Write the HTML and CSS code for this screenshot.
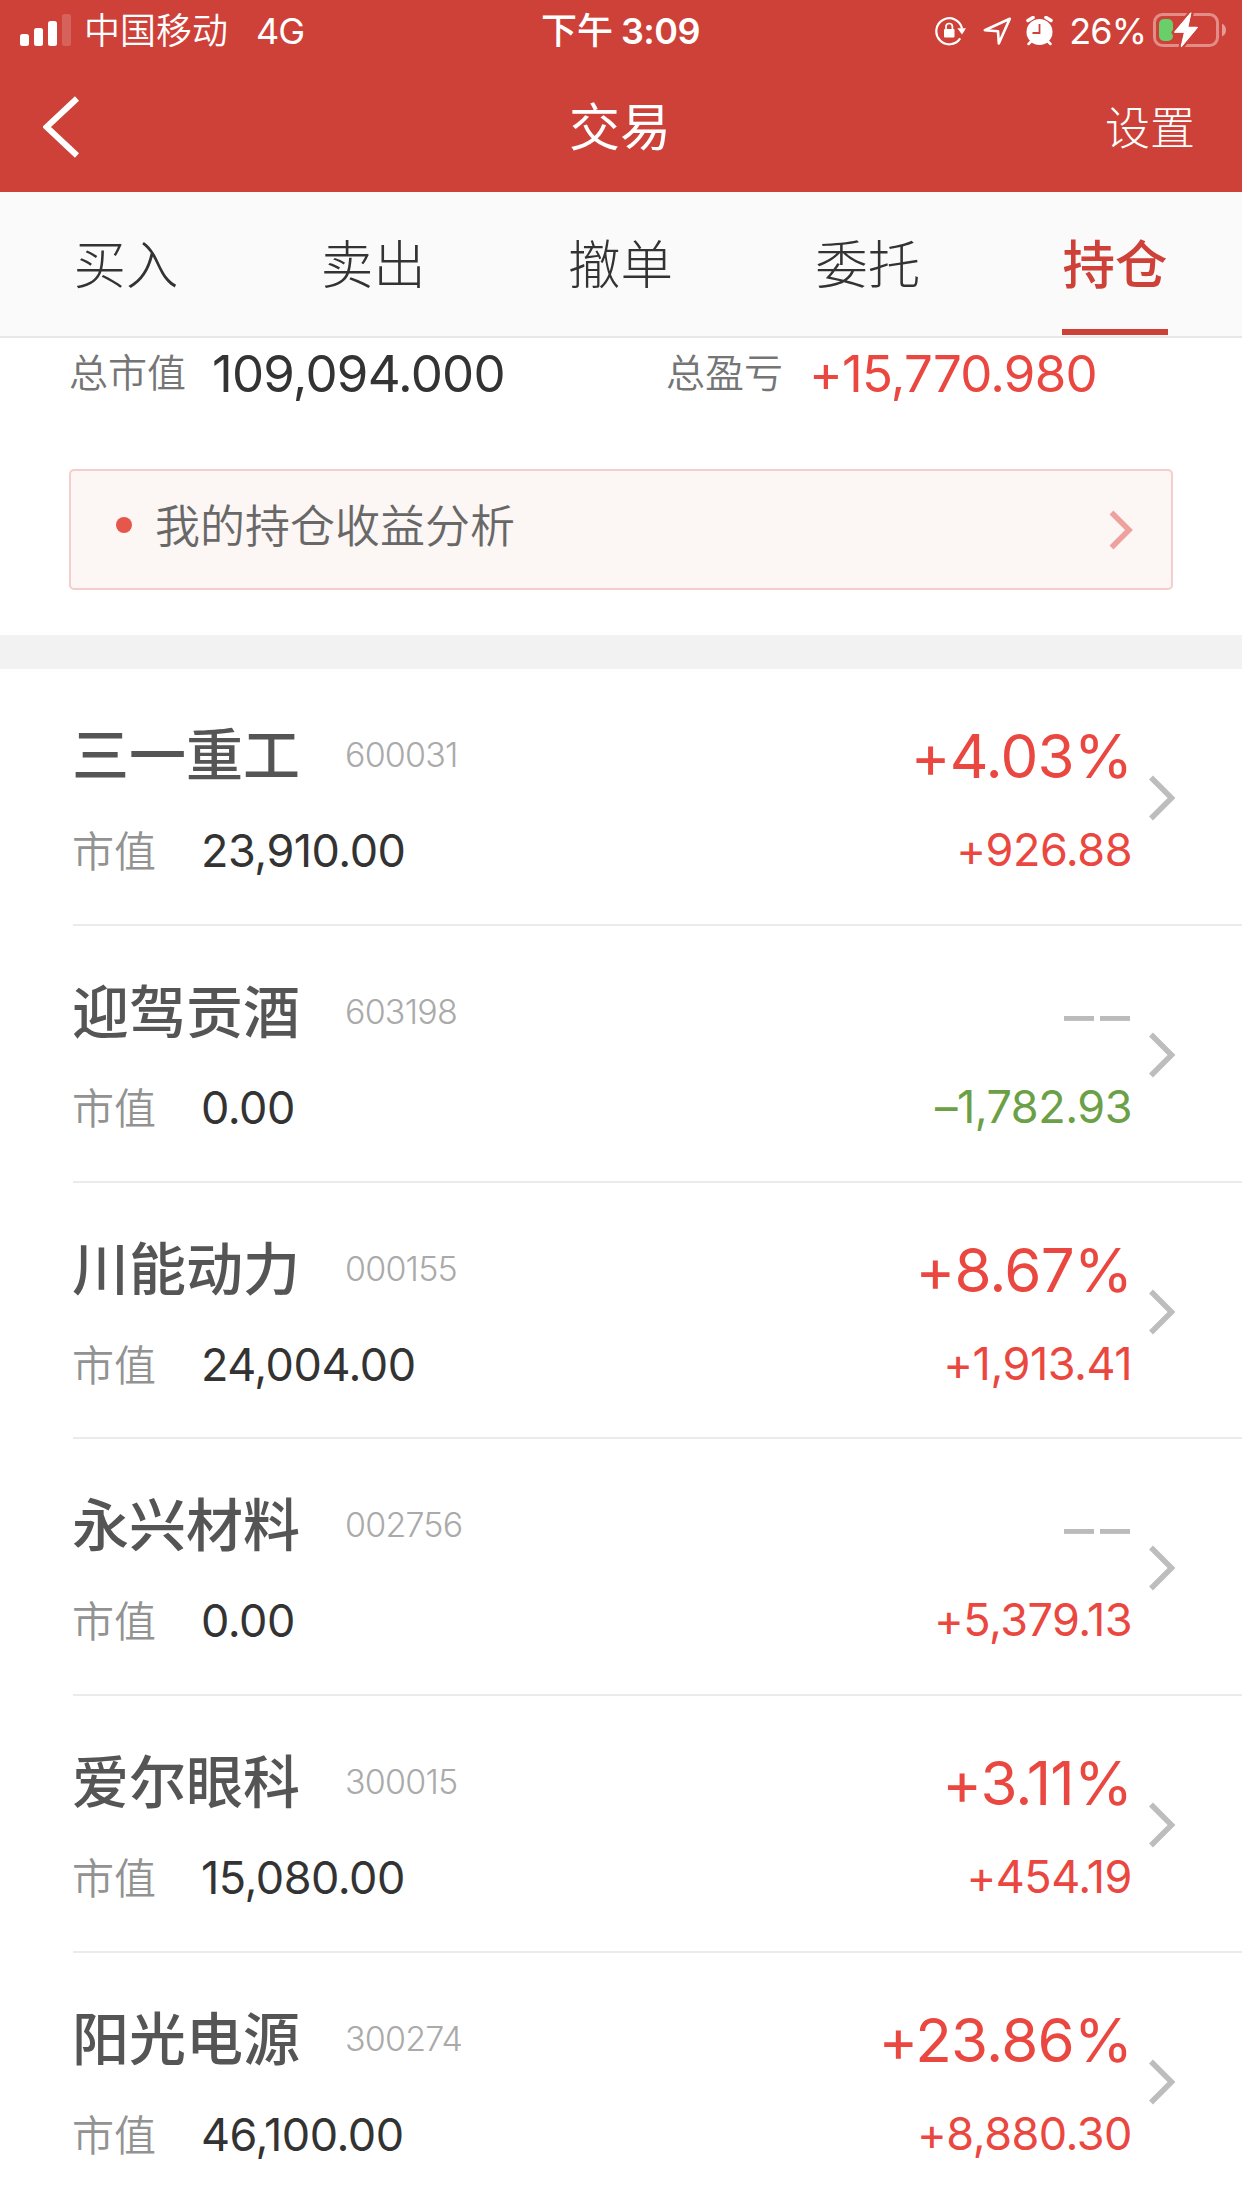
FILE: index.html
```html
<!DOCTYPE html>
<html lang="zh-CN">
<head>
<meta charset="utf-8">
<title>交易</title>
<link rel="stylesheet" href="styles.css">
</head>
<body>
<header class="header">
  <div class="status">
    <div class="status-left">
      <svg class="signal" width="51" height="32" viewBox="0 0 51 32" fill="#fff"><rect y="20" width="9" height="12" rx="2.5"/><rect x="14" y="14" width="9" height="18" rx="2.5"/><rect x="28" y="7" width="9" height="25" rx="2.5"/><rect x="42" width="9" height="32" rx="2.5" opacity=".18"/></svg>
      <span class="carrier">中国移动</span><span class="network">4G</span>
    </div>
    <div class="status-time"><span class="ampm">下午</span><span class="clock">3:09</span></div>
    <div class="status-right">
      <svg class="lock" width="32" height="30" viewBox="0 0 32 30" fill="none"><path d="M25.2 22.4A13 13 0 1 1 27 12.4" stroke="#fff" stroke-width="2.2"/><path d="M22.4 12.2H31L27 18.5Z" fill="#fff"/><rect x="9" y="13" width="10.500" height="8.500" rx="1" fill="#fff"/><path d="M11 14v-3.300a3.200 3.200 0 0 1 6.400 0V14" stroke="#fff" stroke-width="1.700"/></svg>
      <svg class="arrow" width="29" height="29" viewBox="0 0 29 29" fill="none"><path d="M1.800 13.200 26.800 1.800 15.800 26.500 15 14.200Z" stroke="#fff" stroke-width="2.600" stroke-linejoin="round"/></svg>
      <svg class="alarm" width="28" height="30" viewBox="0 0 28 30"><circle cx="13.500" cy="16" r="13" fill="#fff"/><path d="M2 4.500 7 1.500M25 4.500 20 1.500" stroke="#fff" stroke-width="3.500" stroke-linecap="round"/><path d="M5.500 25 2.500 28M21.500 25 24.500 28" stroke="#fff" stroke-width="2.500" stroke-linecap="round"/><path d="M6.500 17H13.500V8" stroke="#ce4138" stroke-width="1.800" fill="none"/></svg>
      <span class="percent">26%</span>
      <svg class="battery" width="74" height="36" viewBox="0 0 74 36"><rect x="1.500" y="2.500" width="63" height="31" rx="8" fill="none" stroke="#e38d88" stroke-width="3"/><path d="M69 11.500q4 2 4 6.500t-4 6.500Z" fill="#e49a95"/><rect x="6" y="7" width="14" height="22" rx="5" fill="#68cf6a"/><path d="M38.500 0 21 20.500H31L28 35.500 45 15H35Z" fill="#fff" stroke="#ce4138" stroke-width="5" paint-order="stroke" stroke-linejoin="round"/><path d="M37.500 1.500 22 20H32L28.500 34 44 15.500H34.500Z" fill="#fff" stroke="#fff" stroke-width="1.500" stroke-linejoin="round"/></svg>
    </div>
  </div>
  <div class="nav">
    <svg class="back" width="38" height="62" viewBox="0 0 38 62" fill="none"><path d="M34 2.500 3.500 31 34 59.500" stroke="#fff" stroke-width="6"/></svg>
    <h1 class="title">交易</h1>
    <span class="settings">设置</span>
  </div>
</header>
<nav class="tabs">
  <span class="tab">买入</span><span class="tab">卖出</span><span class="tab">撤单</span><span class="tab">委托</span><span class="tab tab-active">持仓</span>
</nav>
<section class="summary">
  <div class="totals">
    <div class="total"><span class="total-label">总市值</span><span class="total-value">109,094.000</span></div>
    <div class="total"><span class="total-label">总盈亏</span><span class="total-value up">+15,770.980</span></div>
  </div>
  <div class="analysis">
    <i class="dot"></i><span class="analysis-text">我的持仓收益分析</span>
    <svg width="24" height="40" viewBox="0 0 24 40" fill="none"><path d="M2.500 2.500 20 20 2.500 37.500" stroke="#eea29e" stroke-width="5.500"/></svg>
  </div>
</section>
<main class="list">
  <article class="row">
    <div class="stock"><div class="head"><h2 class="name">三一重工</h2><span class="code">600031</span></div><div class="market"><span class="label">市值</span><span class="value">23,910.00</span></div></div>
    <div class="result"><span class="rate up">+4.03%</span><span class="profit up">+926.88</span></div>
    <svg class="chevron" width="27" height="46" viewBox="0 0 27 46" fill="none"><path d="M2 2.500 22.500 23 2 43.500" stroke="#bdbdbd" stroke-width="5.500"/></svg>
  </article>
  <article class="row">
    <div class="stock"><div class="head"><h2 class="name">迎驾贡酒</h2><span class="code">603198</span></div><div class="market"><span class="label">市值</span><span class="value">0.00</span></div></div>
    <div class="result"><span class="rate none">––</span><span class="profit down">–1,782.93</span></div>
    <svg class="chevron" width="27" height="46" viewBox="0 0 27 46" fill="none"><path d="M2 2.500 22.500 23 2 43.500" stroke="#bdbdbd" stroke-width="5.500"/></svg>
  </article>
  <article class="row">
    <div class="stock"><div class="head"><h2 class="name">川能动力</h2><span class="code">000155</span></div><div class="market"><span class="label">市值</span><span class="value">24,004.00</span></div></div>
    <div class="result"><span class="rate up">+8.67%</span><span class="profit up">+1,913.41</span></div>
    <svg class="chevron" width="27" height="46" viewBox="0 0 27 46" fill="none"><path d="M2 2.500 22.500 23 2 43.500" stroke="#bdbdbd" stroke-width="5.500"/></svg>
  </article>
  <article class="row">
    <div class="stock"><div class="head"><h2 class="name">永兴材料</h2><span class="code">002756</span></div><div class="market"><span class="label">市值</span><span class="value">0.00</span></div></div>
    <div class="result"><span class="rate none">––</span><span class="profit up">+5,379.13</span></div>
    <svg class="chevron" width="27" height="46" viewBox="0 0 27 46" fill="none"><path d="M2 2.500 22.500 23 2 43.500" stroke="#bdbdbd" stroke-width="5.500"/></svg>
  </article>
  <article class="row">
    <div class="stock"><div class="head"><h2 class="name">爱尔眼科</h2><span class="code">300015</span></div><div class="market"><span class="label">市值</span><span class="value">15,080.00</span></div></div>
    <div class="result"><span class="rate up">+3.11%</span><span class="profit up">+454.19</span></div>
    <svg class="chevron" width="27" height="46" viewBox="0 0 27 46" fill="none"><path d="M2 2.500 22.500 23 2 43.500" stroke="#bdbdbd" stroke-width="5.500"/></svg>
  </article>
  <article class="row">
    <div class="stock"><div class="head"><h2 class="name">阳光电源</h2><span class="code">300274</span></div><div class="market"><span class="label">市值</span><span class="value">46,100.00</span></div></div>
    <div class="result"><span class="rate up">+23.86%</span><span class="profit up">+8,880.30</span></div>
    <svg class="chevron" width="27" height="46" viewBox="0 0 27 46" fill="none"><path d="M2 2.500 22.500 23 2 43.500" stroke="#bdbdbd" stroke-width="5.500"/></svg>
  </article>
</main>
</body>
</html>
```
FILE: styles.css
```css
* { box-sizing: border-box; }
html { overflow: hidden; }
body {
  margin: 0;
  width: 1242px;
  height: 2208px;
  overflow: hidden;
  background: #fff;
  color: #333;
  font-family: Inter, "Noto Sans CJK SC", sans-serif;
  white-space: nowrap;
}
svg { display: block; flex: none; }
h1, h2 { margin: 0; font-weight: 400; }

.header { height: 192px; background: #ce4138; color: #fff; }
.status {
  display: grid;
  grid-template-columns: 1fr auto 1fr;
  height: 62px;
  padding: 0 16px 0 20px;
  font-size: 36px;
  line-height: 62px;
}
.status-left, .status-time, .status-right { display: flex; align-items: center; }
.signal { margin: -2px 13px 0 0; }
.carrier { font-weight: 350; }
.network { margin-left: 28px; letter-spacing: -1px; }
.status-time { padding-right: 5px; }
.clock { margin-left: 8px; font-weight: 600; letter-spacing: -0.5px; }
.ampm { font-weight: 500; }
.status-right { justify-content: flex-end; }
.arrow { margin-left: 16px; }
.alarm { margin-left: 14px; }
.percent { margin-left: 15px; letter-spacing: -1px; }
.battery { margin: -2px -1px 0 7px; }

.nav {
  display: grid;
  grid-template-columns: 1fr auto 1fr;
  align-items: center;
  height: 130px;
  padding: 0 47px 0 45px;
}
.back { margin-left: -2px; }
.title { padding-bottom: 6px; font-size: 51px; }
.settings { justify-self: end; padding-bottom: 3px; font-size: 45px; font-weight: 300; }

.tabs {
  display: flex;
  justify-content: space-between;
  height: 146px;
  padding: 0 74px 0 73px;
  background: #fafafa;
  border-bottom: 2px solid #e7e7e7;
  font-size: 52.500px;
  font-weight: 300;
  line-height: 147px;
}
.tab { width: 106px; height: 143px; text-align: center; }
.tab-active { color: #ce4138; font-weight: 500; border-bottom: 6px solid #ce4138; }

.summary { height: 331px; padding: 0 69px; border-bottom: 34px solid #f2f2f2; }
.totals { display: flex; height: 131px; }
.total { display: flex; flex: none; width: 597px; height: 70px; line-height: 70px; }
.total-label { width: 143px; font-size: 39px; color: #757575; font-weight: 350; }
.total-value { font-size: 51px; line-height: 72px; letter-spacing: -0.8px; }
.total-value, .code, .value, .rate, .profit { font-feature-settings: "calt" 0; }
.up { color: #ea4740; }
.down { color: #6ba046; }
.analysis {
  display: flex;
  align-items: center;
  height: 121px;
  padding: 0 38px 0 45px;
  border: 2px solid #f5cdca;
  border-radius: 5px;
  background: #fcf6f4;
}
.dot { width: 16px; height: 16px; margin-top: -9px; border-radius: 50%; background: #e5564b; }
.analysis-text { flex: 1; margin: -12px 0 0 23px; font-size: 45px; font-weight: 350; color: #686868; }

.list { padding-left: 73px; }
.row {
  display: flex;
  height: 256.800px;
  padding-right: 66px;
  border-bottom: 2px solid #ebebeb;
}
.row:last-child { border-bottom: 0; }
.stock { flex: 1; }
.head { display: flex; height: 132px; padding-top: 46px; }
.name { width: 273px; margin-left: -1px; font-size: 57px; font-weight: 500; line-height: 82px; color: #555; }
.code { font-size: 34px; line-height: 79px; color: #aaa; letter-spacing: -0.8px; font-weight: 300; }
.market { display: flex; line-height: 100px; }
.label { width: 129px; margin-left: -1px; font-size: 42px; font-weight: 350; line-height: 102px; color: #929292; }
.value { font-size: 45px; letter-spacing: -0.5px; }
.result { display: flex; flex-direction: column; align-items: flex-end; margin-right: 17px; }
.rate { height: 132px; padding-top: 46px; font-size: 60px; line-height: 83px; letter-spacing: -0.8px; }
.none { margin-right: -4px; color: #bbb; line-height: 86px; letter-spacing: 6px; }
.profit { font-size: 45px; line-height: 98px; letter-spacing: -0.5px; }
.chevron { margin-top: 106px; }
```
